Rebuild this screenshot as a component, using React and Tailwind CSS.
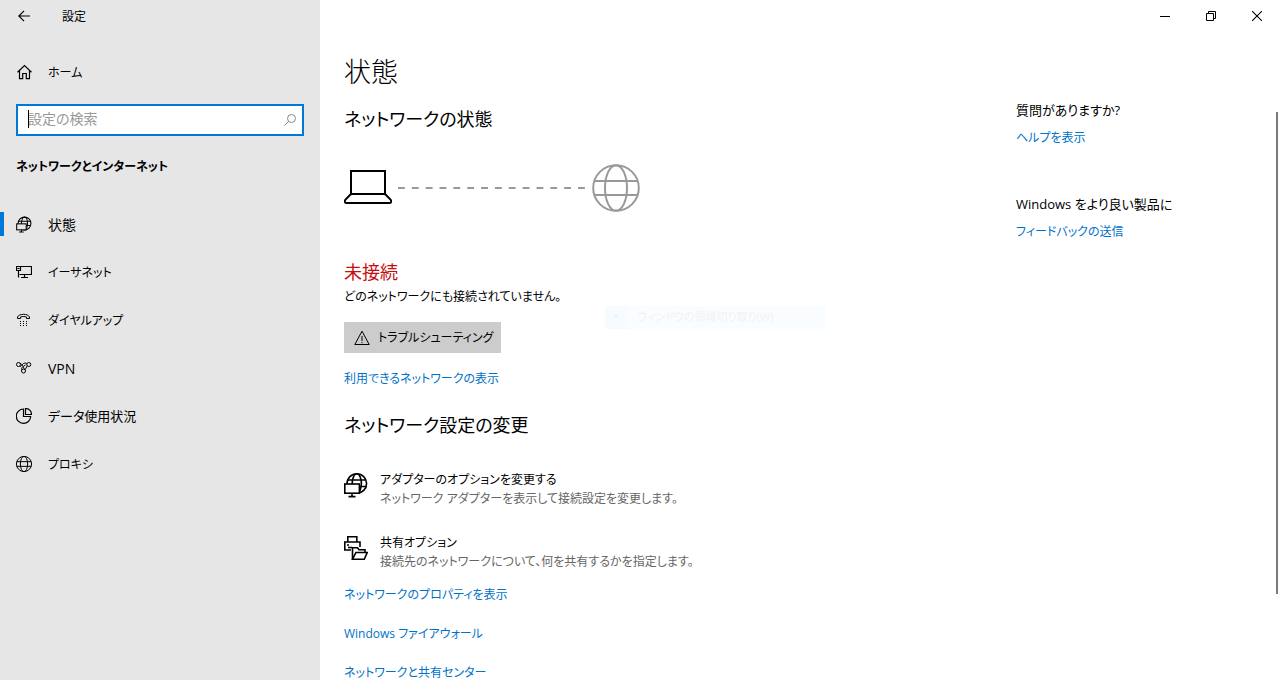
import React from 'react';

const GlobeIcon = ({ className, strokeWidth = 1 }) => (
  <svg className={className} viewBox="0 0 48 48" fill="none" stroke="currentColor" strokeWidth={strokeWidth}>
    <circle cx="24" cy="24" r="22.8" />
    <ellipse cx="24" cy="24" rx="11" ry="22.8" />
    <path d="M2.5 17h43M2.5 31h43" />
  </svg>
);

const StatusIcon = ({ className, screen = 'fill-white' }) => (
  <svg className={className} viewBox="0 0 24 26" fill="none" stroke="currentColor" strokeWidth="1.6">
    <circle cx="12.8" cy="11.5" r="9.8" />
    <ellipse cx="12.8" cy="11.5" rx="4.6" ry="9.8" />
    <path d="M4 8h17.6M3 14.5h19.4" />
    <rect className={screen} x="0.8" y="12" width="14.6" height="9.2" />
    <path d="M8 21.2v3.4M4.5 24.6h7" />
  </svg>
);

const EthernetIcon = () => (
  <svg className="w-4 h-4" viewBox="0 0 16 16" fill="none" stroke="currentColor" strokeWidth="1.2">
    <path d="M5 2.5h10.5v8H3.5M8.5 10.5v3M5 13.5h7" />
    <path d="M0.5 2.5h4v4h-4zM2.5 6.5v7M1.5 4.5h2" />
  </svg>
);

const DialupIcon = () => (
  <svg className="w-4 h-4" viewBox="0 0 16 16" fill="none" stroke="currentColor">
    <path d="M1.5 6.5V5C3 1.4 12 1.4 13.5 5V6.5h-3V5C8.5 4.4 6.5 4.4 4.5 5V6.5z" />
    <path strokeDasharray="1 2" d="M4 9.5h7M4 11.5h7M4 13.5h7" />
  </svg>
);

const VpnIcon = () => (
  <svg className="w-4 h-4" viewBox="0 0 16 16" fill="none" stroke="currentColor">
    <circle cx="2.5" cy="4.5" r="2" />
    <circle cx="12.8" cy="4.5" r="2" />
    <circle cx="7.5" cy="11" r="2" />
    <path d="M4 3.5C6 3 7 7 8.5 9.2M11.2 5.8L9.2 9.7M3.8 6C5 7.5 6 4 8 3.3S10.5 3.5 11 4M5.8 9.9C5.2 8.2 6 7.2 7.5 6.4L9.5 4.8" />
  </svg>
);

const DataIcon = () => (
  <svg className="w-4 h-4" viewBox="0 0 16 16" fill="none" stroke="currentColor" strokeWidth="1.2">
    <path d="M7.5 1A7.2 7.2 0 1 0 14.7 8.5H7.5z" />
    <path d="M9.5 0.5v6h6C15.5 3 13 0.5 9.5 0.5z" />
  </svg>
);

const SharingIcon = () => (
  <svg className="w-6 h-[26px]" viewBox="0 -1 24 26" fill="none" stroke="currentColor" strokeWidth="1.6">
    <path d="M3.8 6V0.8h9V6M7 14H0.8V6H16v5M3 9h2" />
    <path d="M4 11.5h4" />
    <path className="fill-white" d="M8.5 23.2V11.8h5l1.5 2h6v2.7" />
    <path className="fill-white" d="M8.5 23.2l3.5-6.7h11.2l-2.9 6.7z" />
  </svg>
);

const LaptopIcon = () => (
  <svg className="w-12 h-12" viewBox="0 0 48 48" fill="none" stroke="currentColor" strokeWidth="2">
    <path d="M7 30V7h34v23z" />
    <path d="M7 30l-5.5 5.5C0 38 1 39 3 39h42c2 0 3-1 1.5-3.5L41 30" />
  </svg>
);

const navItems = [
  { label: '状態', icon: <StatusIcon className="w-4 h-[17px]" screen="fill-[#e6e6e6]" />, active: true, size: 'text-sm' },
  { label: 'イーサネット', icon: <EthernetIcon />, size: 'text-xs' },
  { label: 'ダイヤルアップ', icon: <DialupIcon />, size: 'text-xs' },
  { label: 'VPN', icon: <VpnIcon />, size: 'text-sm' },
  { label: 'データ使用状況', icon: <DataIcon />, size: 'text-[13px]' },
  { label: 'プロキシ', icon: <GlobeIcon className="w-4 h-4" strokeWidth={3} />, size: 'text-xs' },
];

const options = [
  {
    title: 'アダプターのオプションを変更する',
    description: 'ネットワーク アダプターを表示して接続設定を変更します。',
    icon: <StatusIcon className="w-6 h-[26px]" />,
  },
  {
    title: '共有オプション',
    description: '接続先のネットワークについて、何を共有するかを指定します。',
    icon: <SharingIcon />,
  },
];

const relatedLinks = ['ネットワークのプロパティを表示', 'Windows ファイアウォール', 'ネットワークと共有センター'];

const Sidebar = () => (
  <aside className="w-80 shrink-0 bg-[#e6e6e6]">
    <div className="flex h-8 items-center">
      <button className="flex w-12 justify-center" aria-label="戻る">
        <svg className="w-3 h-3" viewBox="0 0 12 12" fill="none" stroke="currentColor" strokeWidth="1.2">
          <path d="M12 6H1M6 0.8L0.8 6L6 11.2" />
        </svg>
      </button>
      <span className="ml-3.5 pt-0.5">設定</span>
    </div>

    <a href="#home" className="mt-4 flex h-12 items-center gap-4 px-4">
      <svg className="w-4 h-4" viewBox="0 0 16 16" fill="none" stroke="currentColor" strokeWidth="1.2">
        <path d="M1.5 8.3L8.5 1.5l7 6.8M3.5 6.5v8.2h3.2V9.5h3.6v5.2h3.2V6.5" />
      </svg>
      <span className="pt-0.5">ホーム</span>
    </a>

    <div className="relative mx-4 mt-2">
      <input
        type="text"
        aria-label="設定の検索"
        placeholder="設定の検索"
        className="block h-8 w-full border-2 border-[#0078d7] bg-white pl-2.5 pr-8 pb-1 outline-none text-sm placeholder:text-[#999999]"
      />
      <span className="absolute left-3 top-1.5 h-[18px] w-px bg-black"></span>
      <svg className="absolute right-2 top-2.5 w-3 h-3" viewBox="0 0 12 12" fill="none" stroke="#888888">
        <circle cx="7.5" cy="4.5" r="4" />
        <path d="M4.7 7.3L0.3 11.7" />
      </svg>
    </div>

    <h2 className="mt-[19px] px-4 font-bold leading-6">ネットワークとインターネット</h2>

    <nav className="mt-[21px]">
      {navItems.map((item) => (
        <a key={item.label} href="#nav" className="relative flex h-12 items-center gap-4 px-4">
          {item.active && <span className="absolute left-0 top-3 h-6 w-1 bg-[#0078d7]"></span>}
          {item.icon}
          <span className={`pt-0.5 ${item.size}`}>{item.label}</span>
        </a>
      ))}
    </nav>
  </aside>
);

const WindowControls = () => (
  <div className="flex h-8 justify-end">
    <button className="flex w-[46px] items-center justify-center" aria-label="最小化">
      <svg className="w-2.5 h-2.5" viewBox="0 0 10 10" stroke="currentColor">
        <path d="M0 5.5h10" />
      </svg>
    </button>
    <button className="flex w-[46px] items-center justify-center" aria-label="元に戻す">
      <svg className="w-2.5 h-2.5" viewBox="0 0 10 10" fill="none" stroke="currentColor">
        <path d="M0.5 2.5h7v7h-7zM2.5 2.5v-2h7v7h-2" />
      </svg>
    </button>
    <button className="flex w-[46px] items-center justify-center" aria-label="閉じる">
      <svg className="w-2.5 h-2.5" viewBox="0 0 10 10" stroke="currentColor" strokeWidth="1.1">
        <path d="M0 0l10 10M10 0L0 10" />
      </svg>
    </button>
  </div>
);

const NetworkStatus = () => (
  <section>
    <h2 className="mt-[13px] text-lg leading-7">ネットワークの状態</h2>

    <div className="mt-[31px] flex items-center">
      <LaptopIcon />
      <svg className="mx-1.5 w-[188px] h-0.5" viewBox="0 0 188 2" stroke="#999999" strokeWidth="2">
        <path strokeDasharray="6.85 7" d="M0 1h187" />
      </svg>
      <GlobeIcon className="w-12 h-12 text-[#999999]" strokeWidth={2} />
    </div>

    <p className="mt-12 text-lg leading-6 text-[#c50f0f]">未接続</p>
    <p className="mt-px leading-6">どのネットワークにも接続されていません。</p>
    <button className="mt-[13px] flex h-[31px] items-center gap-2 whitespace-nowrap bg-[#cccccc] pl-2.5 pr-2">
      <svg className="w-4 h-4" viewBox="0 0 16 16" fill="none" stroke="currentColor">
        <path d="M8 1.2L15.2 14.5H0.8zM8 6v5M8 12v1.2" />
      </svg>
      トラブルシューティング
    </button>
    <a href="#networks" className="mt-3.5 block leading-6 text-[#0072c9]">利用できるネットワークの表示</a>
  </section>
);

const NetworkSettings = () => (
  <section>
    <h2 className="mt-5 text-lg leading-7">ネットワーク設定の変更</h2>

    <div className="mt-[31px] flex flex-col gap-[25px]">
      {options.map((option) => (
        <a key={option.title} href="#option" className="flex gap-3">
          <span className="pt-0.5">{option.icon}</span>
          <span>
            <span className="block leading-5">{option.title}</span>
            <span className="block leading-[18px] text-[#666666]">{option.description}</span>
          </span>
        </a>
      ))}
    </div>

    <div className="mt-3 flex flex-col items-start gap-[15px]">
      {relatedLinks.map((link) => (
        <a key={link} href="#related" className="leading-6 text-[#0072c9]">{link}</a>
      ))}
    </div>
  </section>
);

const HelpPanel = () => (
  <aside className="w-[264px] shrink-0 pt-[66px]">
    <p className="text-[13px] leading-6">質問がありますか?</p>
    <a href="#help" className="mt-1 block leading-6 text-[#0072c9]">ヘルプを表示</a>
    <p className="mt-[42px] text-[13px] leading-6">Windows をより良い製品に</p>
    <a href="#feedback" className="mt-1 block leading-6 text-[#0072c9]">フィードバックの送信</a>
  </aside>
);

const App = () => {
  return (
    <div className="flex h-screen overflow-hidden bg-white text-xs text-black font-['Open_Sans','Noto_Sans_CJK_JP',sans-serif] [font-feature-settings:'palt']">
      <Sidebar />

      <div className="relative min-w-0 flex-1">
        <WindowControls />
        <div className="flex">
          <main className="min-w-0 flex-1 pl-6 pt-5">
            <h1 className="text-[27px] font-light leading-10">状態</h1>
            <NetworkStatus />
            <NetworkSettings />
          </main>
          <HelpPanel />
        </div>

        {/* Fading menu entry */}
        <div className="absolute left-[285px] top-[306px] flex h-[23px] w-[220px] items-center bg-[#fafdff] text-[11px] text-[#f0f3f6]">
          <span className="flex h-full w-[22px] items-center justify-center bg-[#f5fbff] text-[#e9f4fc]">▪</span>
          <span className="ml-2.5">ウィンドウの領域切り取り(W)</span>
        </div>

        {/* Scrollbar thumb */}
        <div className="absolute right-0.5 top-28 h-[482px] w-0.5 bg-[#7a7a7a]"></div>
      </div>
    </div>
  );
};

export default App;
